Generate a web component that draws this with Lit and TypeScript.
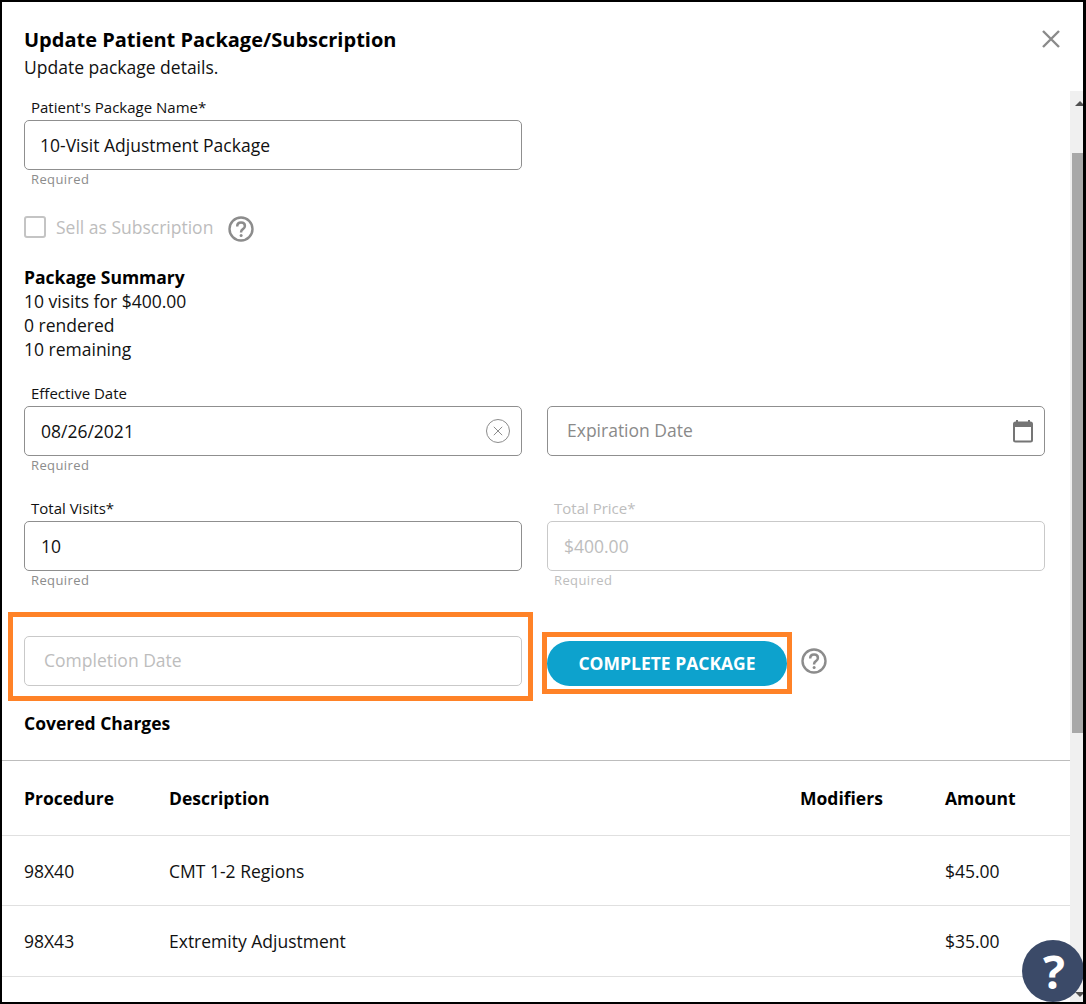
import { LitElement, css, html, svg } from "lit";
import { customElement } from "lit/decorators.js";

const helpIcon = (size: number) => html`
  <svg class="help" width=${size} height=${size} viewBox="0 0 26 26" fill="none">
    <circle cx="13" cy="13" r="11.5" stroke="#8c8c8c" stroke-width="2.4"></circle>
    <path
      d="M9.2 10.4c0-2.3 1.7-3.8 3.9-3.8s3.8 1.4 3.8 3.3c0 1.5-.8 2.4-2 3.2-1.2.8-1.8 1.4-1.8 2.8v.5"
      stroke="#8c8c8c"
      stroke-width="2.5"
    ></path>
    <circle cx="13.1" cy="19.6" r="1.5" fill="#8c8c8c"></circle>
  </svg>
`;

const calendarIcon = svg`
  <svg width="22" height="24" viewBox="0 0 22 24" fill="none">
    <path d="M5 1v3M17 1v3" stroke="#757575" stroke-width="2"></path>
    <rect x="2" y="3.5" width="18" height="19" rx="1.5" stroke="#757575" stroke-width="2"></rect>
    <rect x="2" y="3.5" width="18" height="4.5" fill="#757575"></rect>
  </svg>
`;

const clearIcon = svg`
  <svg width="26" height="26" viewBox="0 0 26 26" fill="none">
    <circle cx="13" cy="13" r="11.5" stroke="#8c8c8c" stroke-width="1"></circle>
    <path d="M8.8 8.8l8.4 8.4M17.2 8.8l-8.4 8.4" stroke="#8c8c8c" stroke-width="1"></path>
  </svg>
`;

const charges = [
  { code: "98X40", description: "CMT 1-2 Regions", amount: "$45.00" },
  { code: "98X43", description: "Extremity Adjustment", amount: "$35.00" },
];

@customElement("app-root")
export class AppRoot extends LitElement {
  static styles = css`
    :host {
      display: block;
      position: relative;
      width: 1086px;
      height: 1004px;
      box-sizing: border-box;
      border: solid #000;
      border-width: 2px 3px 2px 2px;
      background: #fff;
      overflow: hidden;
      font-family: "Open Sans", sans-serif;
      font-size: 17.5px;
      color: #111;
    }

    .header {
      height: 89px;
      box-sizing: border-box;
      padding: 24px 22px 0;
      position: relative;
    }

    h1 {
      margin: 0;
      font-size: 20px;
      line-height: 28px;
      font-weight: 700;
      color: #000;
    }

    .subtitle {
      line-height: 24px;
      margin-top: 1px;
    }

    .close {
      position: absolute;
      top: 28px;
      right: 23px;
      display: block;
    }

    .main {
      display: flex;
      height: 911px;
    }

    .content {
      flex: 1;
      min-width: 0;
    }

    .scrollbar {
      width: 13px;
      background: #f0f0f0;
      display: flex;
      flex-direction: column;
      align-items: flex-end;
    }

    .arrow-up,
    .arrow-down {
      width: 0;
      height: 0;
      border: 5px solid transparent;
      transform: translateX(2px);
    }

    .arrow-up {
      margin-top: 10px;
      border-top: 0;
      border-bottom-color: #505050;
    }

    .arrow-down {
      margin: auto 0 5px;
      border-bottom: 0;
      border-top-color: #505050;
    }

    .thumb {
      width: 11px;
      height: 580px;
      background: #a8a8a8;
      margin-top: 47px;
    }

    .form {
      padding: 0 25px 0 22px;
    }

    .grid {
      display: grid;
      grid-template-columns: 498px 498px;
      column-gap: 25px;
    }

    .label {
      font-size: 15px;
      line-height: 20px;
      height: 20px;
      padding-left: 7px;
      margin-top: 6px;
      margin-bottom: 3px;
    }

    .input {
      height: 50px;
      box-sizing: border-box;
      border: 1px solid #8f8f8f;
      border-radius: 5px;
      display: flex;
      align-items: center;
      justify-content: space-between;
      padding: 0 10px 0 16px;
      line-height: 24px;
      color: #111;
    }

    .name {
      width: 498px;
      padding-left: 15px;
    }

    .placeholder {
      color: #8a8a8a;
      padding-left: 19px;
    }

    .placeholder span {
      margin-top: -2px;
    }

    .disabled .label,
    .disabled .hint {
      color: #bdbdbd;
    }

    .disabled .input {
      border-color: #c9c9c9;
      color: #bdbdbd;
    }

    .hint {
      font-size: 13px;
      line-height: 18px;
      height: 18px;
      padding-left: 7px;
      color: #8c8c8c;
      letter-spacing: 0.4px;
    }

    .check-row {
      display: flex;
      align-items: center;
      height: 26px;
      margin-top: 27px;
      color: #bdbdbd;
    }

    .checkbox {
      width: 22px;
      height: 22px;
      box-sizing: border-box;
      border: 2px solid #c4c4c4;
      border-radius: 3px;
      margin-right: 10px;
      margin-top: -3px;
    }

    .check-row .text {
      margin-top: -3px;
      margin-right: 15px;
    }

    .check-row .help {
      margin-top: 2px;
    }

    .summary {
      margin-top: 24px;
      line-height: 24px;
    }

    .summary strong,
    .section {
      font-weight: 700;
      color: #000;
    }

    .dates {
      margin-top: 16px;
    }

    .totals {
      margin-top: 18px;
    }

    .complete-row {
      display: flex;
      align-items: flex-start;
      margin: 23px 0 0 -16px;
    }

    .mark {
      border: 5px solid #ff8227;
      box-sizing: border-box;
    }

    .mark.date {
      width: 525px;
      height: 89px;
      padding: 19px 6px 0 11px;
    }

    .mark.date .input {
      border-color: #c9c9c9;
      color: #bdbdbd;
    }

    .mark.action {
      width: 250px;
      height: 62px;
      margin: 20px 0 0 9px;
      padding: 4px 0 0 0;
    }

    button {
      display: block;
      width: 240px;
      height: 45px;
      border: 0;
      border-radius: 23px;
      background: #0da2cd;
      color: #fff;
      font: 700 17.5px "Open Sans", sans-serif;
      padding: 0 0 2px;
    }

    .complete-row .help {
      margin: 36px 0 0 9px;
    }

    .section {
      line-height: 24px;
      margin-top: 10px;
    }

    .table {
      margin-top: 25px;
      border-top: 1px solid #bdbdbd;
    }

    .tr {
      display: grid;
      grid-template-columns: 145px 631px 145px 1fr;
      padding-left: 22px;
      align-items: center;
      height: 70px;
      box-sizing: border-box;
      border-bottom: 1px solid #e0e0e0;
    }

    .tr:last-child {
      height: 71px;
    }

    .tr.head {
      height: 75px;
      font-weight: 700;
      color: #000;
    }

    .fab {
      position: absolute;
      right: -1px;
      bottom: 0;
      width: 62px;
      height: 62px;
      border-radius: 50%;
      background: #3b4a68;
      display: flex;
      align-items: center;
      justify-content: center;
      color: #fff;
      font-size: 46px;
      font-weight: 700;
      line-height: 1;
      padding-left: 2px;
      box-sizing: border-box;
    }
  `;

  protected render() {
    return html`
      <div class="header">
        <h1>Update Patient Package/Subscription</h1>
        <div class="subtitle">Update package details.</div>
        <svg class="close" width="18" height="18" viewBox="0 0 18 18">
          <path d="M1 1l16 16M17 1L1 17" stroke="#8a8a8a" stroke-width="2.4"></path>
        </svg>
      </div>
      <div class="main">
        <div class="content">
          <div class="form">
            <div class="label">Patient's Package Name*</div>
            <div class="input name">10-Visit Adjustment Package</div>
            <div class="hint">Required</div>

            <div class="check-row">
              <span class="checkbox"></span>
              <span class="text">Sell as Subscription</span>
              ${helpIcon(26)}
            </div>

            <div class="summary">
              <strong>Package Summary</strong><br />
              10 visits for $400.00<br />
              0 rendered<br />
              10 remaining
            </div>

            <div class="grid dates">
              <div>
                <div class="label">Effective Date</div>
                <div class="input">08/26/2021 ${clearIcon}</div>
                <div class="hint">Required</div>
              </div>
              <div>
                <div class="label"></div>
                <div class="input placeholder"><span>Expiration Date</span> ${calendarIcon}</div>
              </div>
            </div>

            <div class="grid totals">
              <div>
                <div class="label">Total Visits*</div>
                <div class="input">10</div>
                <div class="hint">Required</div>
              </div>
              <div class="disabled">
                <div class="label">Total Price*</div>
                <div class="input">$400.00</div>
                <div class="hint">Required</div>
              </div>
            </div>

            <div class="complete-row">
              <div class="mark date">
                <div class="input placeholder"><span>Completion Date</span></div>
              </div>
              <div class="mark action">
                <button>COMPLETE PACKAGE</button>
              </div>
              ${helpIcon(26)}
            </div>

            <div class="section">Covered Charges</div>
          </div>

          <div class="table">
            <div class="tr head">
              <span>Procedure</span><span>Description</span><span>Modifiers</span><span>Amount</span>
            </div>
            ${charges.map(
              (row) => html`
                <div class="tr">
                  <span>${row.code}</span><span>${row.description}</span><span></span><span>${row.amount}</span>
                </div>
              `
            )}
          </div>
        </div>
        <div class="scrollbar">
          <div class="arrow-up"></div>
          <div class="thumb"></div>
          <div class="arrow-down"></div>
        </div>
      </div>
      <div class="fab">?</div>
    `;
  }
}
